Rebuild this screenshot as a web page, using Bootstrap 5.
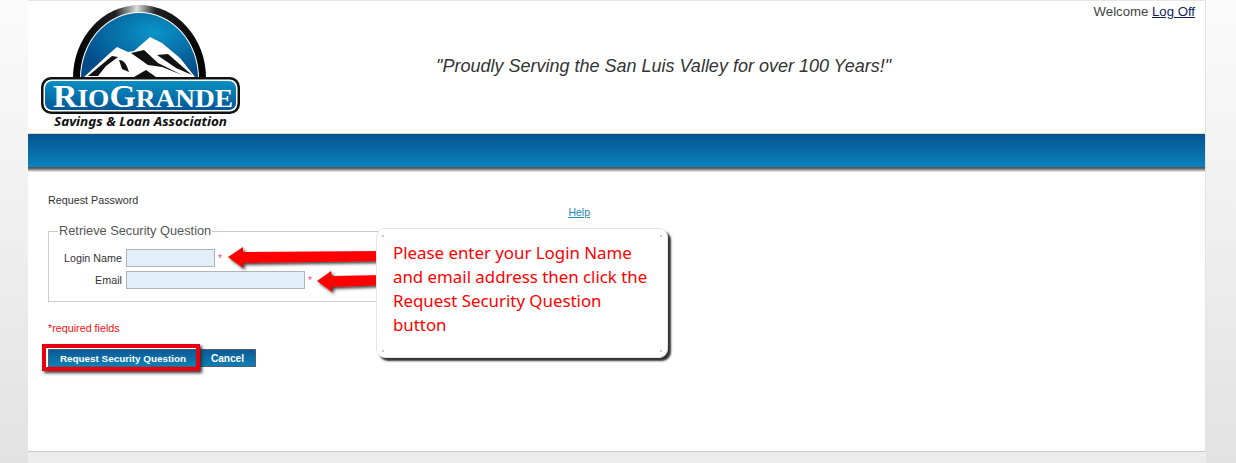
<!DOCTYPE html>
<html lang="en"><head><meta charset="utf-8"><title>Request Password</title>
<link rel="stylesheet" href="https://cdn.jsdelivr.net/npm/bootstrap@5.3.0/dist/css/bootstrap.min.css">
<style>
html,body{height:463px;overflow:hidden}
body{background:linear-gradient(#fbfbfb 0,#f2f2f2 170px,#e2e2e2 463px);font-family:"Liberation Sans",Arial,sans-serif;font-size:10.75px;color:#333}
.shell{position:relative;margin:0 30px 0 28px;width:1178px;height:452px;background:#fff;border-top:1px solid #e6e6e6;border-right:1px solid #e3e3e3;border-bottom:1px solid #c9cabc}
.foot-strip{margin:0 30px 0 28px;width:1178px;height:11px;background:#ececec}
.top-area{height:132px}
.logo-box{width:216px;flex:none}
.tagline{font-style:italic;font-size:18px;color:#333;margin-left:192px;margin-top:55px;line-height:21px;white-space:nowrap}
.welcome{position:absolute;right:10px;top:3px;font-size:13.2px;line-height:16px;color:#444}
.welcome a{color:#0d1f5c}
.band{height:33px;background:linear-gradient(#045390,#0c82bd);border-top:1px solid #e3dcc0;box-sizing:content-box;box-shadow:0 1px 0 #555,0 2px 0 #666,0 3px 0 #8a8a8a,0 4px 0 #bbb,0 5px 0 #ddd}
.main-col{width:542px;margin-left:20px;padding-top:27px}
.page-title{line-height:12px;color:#333}
.help-line{text-align:right;line-height:12px;font-size:10.5px}
.help-line a{color:#2a85b8}
.frame{border:1px solid #ccc;height:71px;margin-top:13px;position:relative;padding:15px 0 0 0}
.frame-legend{position:absolute;left:9px;top:-9px;background:#fff;padding:0 1px;font-size:12.8px;line-height:16px;color:#555}
.form-line{height:22px;gap:4px}
.lbl{width:73px;text-align:right;color:#333;flex:none}
.field{height:18px;background:#e2eef9;border:1px solid #aeb4b8;flex:none}
.field-a{width:89px}.field-b{width:179px}
.star{color:#f0408a;font-size:10px;margin-left:-1px}
.req{color:#f01010;margin-top:20px;line-height:12px}
.actions{margin-top:15px;height:18px}
.act{background:linear-gradient(#0b5a96,#0f7fb6);color:#fff;font-weight:bold;font-size:9.9px;border:1px solid #4a6070;border-radius:0;height:18px;line-height:15px;padding:0}
.act-a{width:150px}.act-b{width:56px;margin-left:2px;border-left:0;font-size:10.1px}
.act:hover{color:#fff}
.red-ring{position:absolute;left:14px;top:343px;width:158px;height:27px;border:4px solid #e6000f;box-shadow:2px 2px 3px #333;pointer-events:none}
.callout{position:absolute;left:348px;top:227px;width:292px;height:130px;border:1px solid #e6e6e6;border-radius:9px;box-shadow:3px 3px 2px #333;color:#f00;font-family:"Noto Sans","Open Sans",sans-serif;font-size:16.85px;line-height:24px;padding:12px 16px;
background:linear-gradient(#ccc,#ccc) 5px 6px/2px 2px no-repeat,linear-gradient(#ccc,#ccc) 283px 6px/2px 2px no-repeat,linear-gradient(#ccc,#ccc) 5px 121px/2px 2px no-repeat,linear-gradient(#ccc,#ccc) 283px 121px/2px 2px no-repeat,#fff}
.arrows{position:absolute;left:0;top:0;pointer-events:none}
</style></head><body>
<div class="shell">
  <div class="top-area d-flex align-items-start">
    <div class="logo-box">
      <svg width="216" height="132" viewBox="28 1 216 132">
        <defs>
          <radialGradient id="sky" cx="62%" cy="30%" r="70%"><stop offset="0" stop-color="#0a95c8"/><stop offset="1" stop-color="#044a88"/></radialGradient>
          <linearGradient id="rim" x1="0" x2="1"><stop offset="0" stop-color="#000"/><stop offset=".32" stop-color="#222"/><stop offset=".48" stop-color="#ddd"/><stop offset=".62" stop-color="#222"/><stop offset="1" stop-color="#000"/></linearGradient>
          <linearGradient id="plate" x1="0" x2="0" y1="0" y2="1"><stop offset="0" stop-color="#0a8fc3"/><stop offset="1" stop-color="#045796"/></linearGradient>
        </defs>
        <path d="M73 78A66.500 73 0 0 1 206 78Z" fill="url(#rim)"/>
        <path d="M80 78A59.500 66 0 0 1 199 78Z" fill="#fff"/>
        <path d="M81 78A58.500 65 0 0 1 198 78Z" fill="url(#sky)"/>
        <path d="M84 77L110 53L117 47L128 52L134 51L150 37L162 43L180 58L195 77Z" fill="#fff"/>
        <path d="M88 76L112 56L118 57L106 66L98 76ZM131 53L144 50L158 63L182 75L162 67L148 65ZM157 55L168 54L192 75L176 68ZM119 60C125 60 127 66 129 72L122 69ZM134 77L146 70L156 77Z" fill="#111"/>
        <rect x="41" y="77" width="199" height="37" rx="10" fill="#111"/>
        <rect x="43.500" y="79.500" width="194" height="32" rx="8" fill="#fff"/>
        <rect x="45" y="81" width="191" height="29" rx="7" fill="url(#plate)"/>
        <text x="53" y="107" fill="#fff" font-family="Liberation Serif,serif" font-weight="700" font-size="31" textLength="180" lengthAdjust="spacingAndGlyphs">R<tspan font-size="25">IO</tspan>G<tspan font-size="25">RANDE</tspan></text>
        <text x="54" y="126" fill="#111" font-family="Noto Sans,sans-serif" font-size="12.500" font-weight="700" font-style="italic" textLength="173" lengthAdjust="spacingAndGlyphs">Savings &amp; Loan Association</text>
      </svg>
    </div>
    <div class="tagline">"Proudly Serving the San Luis Valley for over 100 Years!"</div>
    <div class="welcome">Welcome <a href="#">Log Off</a></div>
  </div>
  <div class="band"></div>
  <div class="main-col">
    <div class="page-title">Request Password</div>
    <div class="help-line"><a href="#">Help</a></div>
    <div class="frame">
      <div class="frame-legend">Retrieve Security Question</div>
      <div class="form-line d-flex align-items-center"><span class="lbl">Login Name</span><span class="field field-a"></span><span class="star">*</span></div>
      <div class="form-line d-flex align-items-center"><span class="lbl">Email</span><span class="field field-b"></span><span class="star">*</span></div>
    </div>
    <div class="req">*required fields</div>
    <div class="actions d-flex"><button class="btn act act-a">Request Security Question</button><button class="btn act act-b">Cancel</button></div>
  </div>
  <div class="red-ring"></div>
  <svg class="arrows" width="400" height="320" viewBox="28 1 400 320">
    <defs><filter id="sh" x="-10%" y="-50%" width="120%" height="200%"><feDropShadow dx="2" dy="2" stdDeviation="1.500" flood-color="#222" flood-opacity=".85"/></filter></defs>
    <path d="M228 257L243 247L243 252L385 251L385 261L243 263L243 268Z" fill="#f00" filter="url(#sh)"/>
    <path d="M317 281L331 271L332 276L385 275L385 285L332 287L332 292Z" fill="#f00" filter="url(#sh)"/>
  </svg>
  <div class="callout">Please enter your Login Name and email address then click the Request Security Question button</div>
</div>
<div class="foot-strip"></div>
<script src="https://cdn.jsdelivr.net/npm/bootstrap@5.3.0/dist/js/bootstrap.bundle.min.js"></script>
</body></html>
